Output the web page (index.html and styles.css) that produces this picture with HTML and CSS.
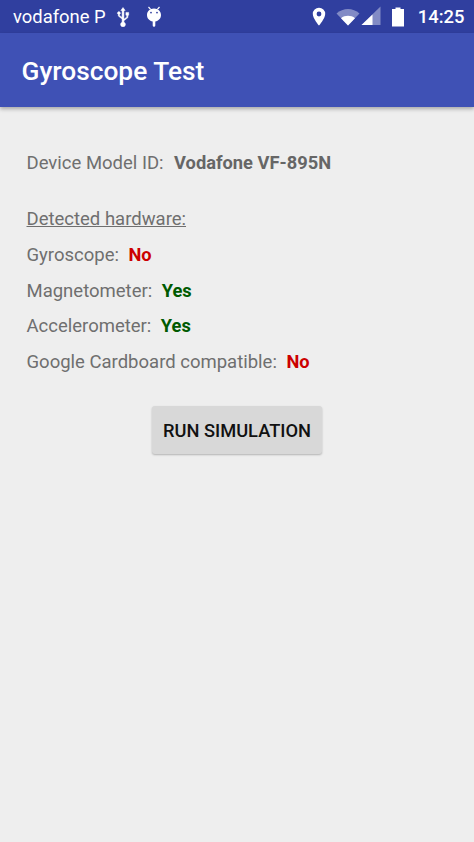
FILE: index.html
```html
<!DOCTYPE html>
<html lang="en">
<head>
<meta charset="utf-8">
<title>Gyroscope Test</title>
<link rel="stylesheet" href="styles.css">
</head>
<body>
<div class="status">
  <span class="carrier">vodafone P</span>
  <svg class="ic usb" width="16" height="20" viewBox="0 0 16 20"><path d="M8 0.5 L10.2 3.5 H8.9 V12.2 L11.8 10 V8.2 H10.9 V5.4 H13.7 V8.2 H12.9 V10.6 L8.9 13.7 V15.2 A2.4 2.4 0 1 1 7.1 15.2 V12 L3.3 9 V7.4 A1.4 1.4 0 1 1 4.5 7.4 V8.4 L7.1 10.4 V3.5 H5.8 Z" fill="#fff" stroke="#fff" stroke-width="0.5"/></svg>
  <svg class="ic droid" width="18" height="22" viewBox="0 0 18 22"><path d="M3.5 1 L5.6 3.4 M14.5 1 L12.4 3.4" stroke="#fff" stroke-width="1.2"/><path d="M9 2.5 C4.5 2.5 2 5.5 2 9 C2 12.5 4.5 15 7.7 15.4 V19.5 A1.3 1.3 0 0 0 10.3 19.5 V15.4 C13.5 15 16 12.5 16 9 C16 5.5 13.5 2.5 9 2.5 Z" fill="#fff"/><circle cx="6" cy="6.6" r="0.9" fill="#303f9f"/><circle cx="12" cy="6.6" r="0.9" fill="#303f9f"/></svg>
  <span class="spacer"></span>
  <svg class="ic pin" width="14" height="20" viewBox="0 0 14 20"><path fill-rule="evenodd" d="M7 0.8 A6.2 6.2 0 0 1 13.2 7 C13.2 11.4 7 18.6 7 18.6 C7 18.6 0.8 11.4 0.8 7 A6.2 6.2 0 0 1 7 0.8 Z M7 4.6 A2.4 2.4 0 1 0 7 9.4 A2.4 2.4 0 1 0 7 4.6 Z" fill="#fff"/></svg>
  <svg class="ic wifi" width="24" height="18" viewBox="0 0 24 18"><path d="M0.5 5.5 C7 -0.5 17 -0.5 23.5 5.5 L12 17.5 Z" fill="#fff" fill-opacity="0.4"/><path d="M5 10.2 C9 7 15 7 19 10.2 L12 17.5 Z" fill="#fff"/></svg>
  <svg class="ic signal" width="20" height="20" viewBox="0 0 20 20"><path d="M19.5 0.5 V19 H0.5 Z" fill="#fff" fill-opacity="0.4"/><path d="M11.5 8.5 V19 H0.5 Z" fill="#fff"/></svg>
  <svg class="ic battery" width="14" height="20" viewBox="0 0 14 20"><path d="M4.5 0.5 H9.5 V2 H13 V19.5 H1 V2 H4.5 Z" fill="#fff"/></svg>
  <span class="time">14:25</span>
</div>
<header class="appbar">Gyroscope Test</header>
<main class="content">
  <p class="model">Device Model ID:<b class="device">Vodafone VF-895N</b></p>
  <p class="hw-title">Detected hardware:</p>
  <p class="row">Gyroscope:<b class="no">No</b></p>
  <p class="row">Magnetometer:<b class="yes">Yes</b></p>
  <p class="row">Accelerometer:<b class="yes">Yes</b></p>
  <p class="row">Google Cardboard compatible:<b class="no">No</b></p>
  <div class="actions"><button class="run" type="button">RUN SIMULATION</button></div>
</main>
</body>
</html>
```

FILE: styles.css
```css
* { box-sizing: border-box; }
html, body { margin: 0; height: 100%; }
body {
  width: 474px;
  height: 842px;
  overflow: hidden;
  background: #eeeeee;
  font-family: Roboto, "Noto Sans", sans-serif;
  display: flex;
  flex-direction: column;
}
.status {
  height: 33px;
  background: #303f9f;
  color: #fff;
  display: flex;
  align-items: center;
  padding: 0 9.5px 0 13px;
  font-size: 18.4px;
  flex: none;
}
.carrier { margin-right: 9px; }
.ic { flex: none; display: block; }
.droid { margin-left: 14px; }
.spacer { flex: 1; }
.wifi { margin-left: 10px; }
.signal { margin-left: 1px; margin-top: -1px; }
.battery { margin-left: 10px; }
.time { margin-left: 12.5px; font-size: 18.4px; font-weight: 500; }
.appbar {
  height: 74px;
  background: #3f51b5;
  color: #fff;
  font-size: 26.3px;
  font-weight: 500;
  padding: 2px 21.5px 0;
  display: flex;
  align-items: center;
  box-shadow: 0 2px 4px rgba(0,0,0,.3);
  flex: none;
  position: relative;
}
.content {
  padding: 45px 26.5px 0;
  color: #6f6f6f;
  font-size: 18.5px;
  flex: 1;
}
.content p { margin: 0; height: 21px; line-height: 21px; white-space: nowrap; }
.model { margin-bottom: 36px !important; }
.hw-title { text-decoration: underline; margin-bottom: 14px !important; }
.row { margin-bottom: 14.6px !important; }
.device { margin-left: 10.5px; font-weight: 700; font-size: 18.3px; color: #666; }
.no, .yes { margin-left: 9.5px; font-weight: 700; font-size: 18.3px; }
.no { color: #cc0000; }
.yes { color: #005a00; }
.actions { display: flex; justify-content: center; margin-top: 34px; }
.run {
  width: 170px;
  height: 48px;
  border: 0;
  border-radius: 3px;
  background: #d8d8d8;
  box-shadow: 0 1px 2px rgba(0,0,0,.25);
  color: #111;
  font-family: Roboto, sans-serif;
  font-size: 18.3px;
  font-weight: 500;
  padding: 2px 0 0;
}
```
